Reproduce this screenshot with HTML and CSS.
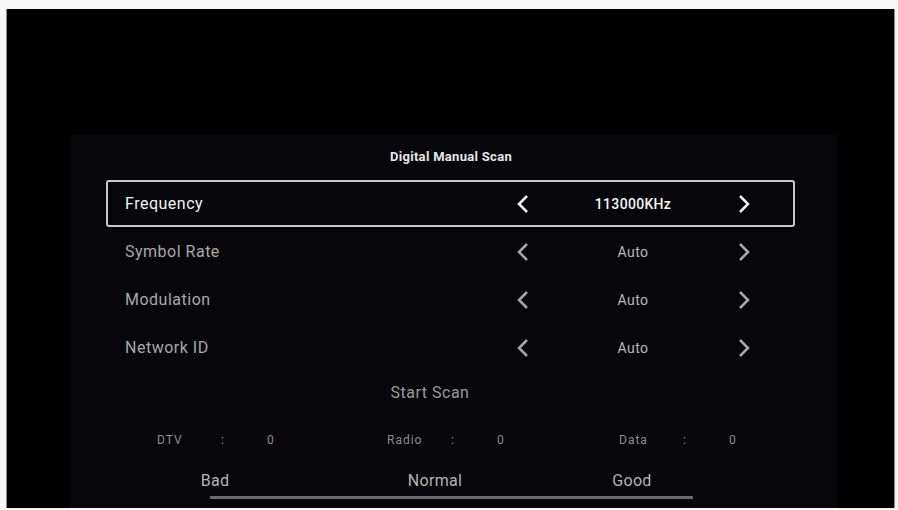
FILE: index.html
```html
<!DOCTYPE html>
<html lang="en">
<head>
    <meta charset="UTF-8">
    <meta name="viewport" content="width=device-width, initial-scale=1.0">
    <title>Digital Manual Scan</title>
    <link rel="stylesheet" href="styles.css">
</head>
<body>
    <div class="screen">
        <div class="panel">
            <h2 class="title">Digital Manual Scan</h2>

            <div class="options">
                <div class="row selected">
                    <span class="label">Frequency</span>
                    <svg class="arrow" viewBox="0 0 13 20"><polyline points="11,2 3,10 11,18"/></svg>
                    <span class="value">113000KHz</span>
                    <svg class="arrow" viewBox="0 0 13 20"><polyline points="2,2 10,10 2,18"/></svg>
                </div>
                <div class="row">
                    <span class="label">Symbol Rate</span>
                    <svg class="arrow" viewBox="0 0 13 20"><polyline points="11,2 3,10 11,18"/></svg>
                    <span class="value">Auto</span>
                    <svg class="arrow" viewBox="0 0 13 20"><polyline points="2,2 10,10 2,18"/></svg>
                </div>
                <div class="row">
                    <span class="label">Modulation</span>
                    <svg class="arrow" viewBox="0 0 13 20"><polyline points="11,2 3,10 11,18"/></svg>
                    <span class="value">Auto</span>
                    <svg class="arrow" viewBox="0 0 13 20"><polyline points="2,2 10,10 2,18"/></svg>
                </div>
                <div class="row">
                    <span class="label">Network ID</span>
                    <svg class="arrow" viewBox="0 0 13 20"><polyline points="11,2 3,10 11,18"/></svg>
                    <span class="value">Auto</span>
                    <svg class="arrow" viewBox="0 0 13 20"><polyline points="2,2 10,10 2,18"/></svg>
                </div>
            </div>

            <div class="start">Start Scan</div>

            <div class="stats">
                <div class="stat"><span class="stat-name">DTV</span><span class="stat-colon">:</span><span>0</span></div>
                <div class="stat"><span class="stat-name">Radio</span><span class="stat-colon">:</span><span>0</span></div>
                <div class="stat"><span class="stat-name">Data</span><span class="stat-colon">:</span><span>0</span></div>
            </div>

            <div class="quality">
                <span>Bad</span>
                <span>Normal</span>
                <span>Good</span>
            </div>
            <div class="quality-bar"></div>
        </div>
    </div>
</body>
</html>
```

FILE: styles.css
```css
body {
    margin: 0;
    background: #f7f7f7;
    font-family: Roboto, "Liberation Sans", Arial, sans-serif;
    height: 510px;
    overflow: hidden;
}
.screen {
    margin: 9px 3px 0 6px;
    height: 499px;
    background: #000;
    border-left: 1px solid #888;
    border-right: 1px solid #888;
    box-sizing: border-box;
    padding-top: 126px;
}
.panel {
    margin-left: 63px;
    width: 768px;
    height: 373px;
    background: #07070b;
}
.title {
    margin: 0;
    height: 45px;
    line-height: 44px;
    text-align: center;
    font-size: 13px;
    font-weight: bold;
    letter-spacing: 0.3px;
    color: #e6e6e6;
    padding-right: 6px;
}
.options {
    display: flex;
    flex-direction: column;
    gap: 1px;
    margin-left: 36px;
    width: 689px;
}
.row {
    display: grid;
    grid-template-columns: 1fr 24px 198px 24px 37px;
    align-items: center;
    justify-items: center;
    height: 47px;
    border: 2px solid transparent;
    box-sizing: border-box;
    color: #a8a8a8;
}
.row.selected {
    border-color: #c8c8c8;
    border-radius: 3px;
    color: #f2f2f2;
}
.label {
    justify-self: start;
    padding-left: 17px;
    font-size: 16px;
    letter-spacing: 0.5px;
}
.value {
    font-size: 14px;
    letter-spacing: 0.5px;
    color: #b8b8b8;
}
.selected .value {
    color: #f4f4f4;
    font-weight: 500;
    letter-spacing: 0.3px;
}
.arrow {
    width: 13px;
    height: 20px;
    fill: none;
    stroke: currentColor;
    stroke-width: 2.5;
}
.start {
    margin-top: 10px;
    line-height: 24px;
    text-align: center;
    padding-right: 48px;
    font-size: 16px;
    letter-spacing: 0.5px;
    color: #9a9a9a;
}
.stats {
    display: grid;
    grid-template-columns: 230px 232px 200px;
    margin: 25px 0 0 87px;
    line-height: 20px;
    font-size: 12px;
    letter-spacing: 1px;
    color: #8c8c8c;
}
.stat {
    display: flex;
}
.stat-name {
    width: 64px;
}
.stat-colon {
    width: 46px;
}
.quality {
    display: grid;
    grid-template-columns: 220px 220px 174px;
    justify-items: center;
    margin: 19px 0 0 35px;
    line-height: 24px;
    font-size: 16px;
    letter-spacing: 0.3px;
    color: #b4b4b4;
}
.quality-bar {
    margin: 3px 0 0 140px;
    width: 483px;
    height: 3px;
    background: #6a6a6a;
}
```
